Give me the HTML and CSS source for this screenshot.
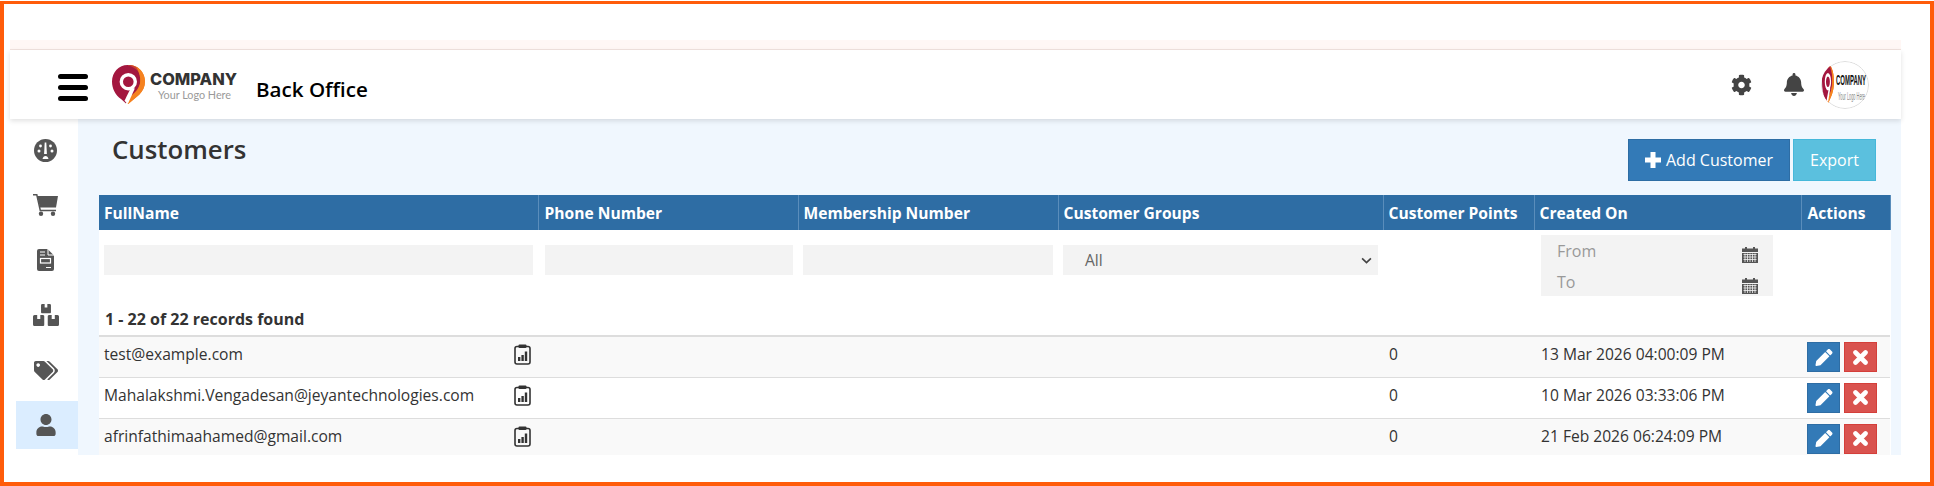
FILE: index.html
```html
<!DOCTYPE html>
<html lang="en">
<head>
  <meta charset="UTF-8" />
  <meta name="viewport" content="width=device-width, initial-scale=1.0"/>
  <title>Customers</title>
  <link rel="stylesheet" href="styles.css">
</head>
<body>
  <svg class="defs" width="0" height="0" aria-hidden="true">
    <defs>
      <symbol id="i-report" viewBox="0 0 17 21">
        <rect x="1" y="2.5" width="15" height="17.5" rx="2" fill="none" stroke="#333" stroke-width="1.6"/>
        <rect x="4.5" y="0.5" width="8" height="3.5" rx="1" fill="#333"/>
        <path d="M4 13h2.4v4H4zM7.4 11h2.4v6H7.4zM10.8 7.5h2.4V17h-2.4z" fill="#333"/>
      </symbol>
      <symbol id="i-cal" viewBox="0 0 16 17">
        <path d="M0 2.5h3V1h2v1.500h6V1h2v1.500h3V6H0z" fill="#555"/>
        <path d="M0 7h16v10H0z" fill="#555"/>
        <path d="M1.500 8.500h13M1.500 11h13M1.500 13.500h13M3 7.500v8.500M5.500 7.500v8.500M8 7.500v8.500M10.500 7.500v8.500M13 7.500v8.500" stroke="#f3f3f3" stroke-width=".8" fill="none"/>
      </symbol>
      <symbol id="i-pencil" viewBox="0 0 512 512">
        <path fill="#fff" d="M497.900 142.100l-46.100 46.100c-4.700 4.700-12.300 4.700-17 0l-111-111c-4.700-4.700-4.700-12.300 0-17l46.100-46.100c18.700-18.700 49.100-18.700 67.900 0l60.100 60.100c18.800 18.700 18.800 49.100 0 67.900zM284.200 99.800L21.600 362.400.4 483.900c-2.900 16.400 11.400 30.600 27.800 27.800l121.500-21.300 262.600-262.600c4.700-4.700 4.700-12.300 0-17l-111-111c-4.800-4.700-12.400-4.700-17.100 0z"/>
      </symbol>
      <symbol id="i-close" viewBox="0 0 15 15">
        <path d="M2.500 2.500l10 10M12.500 2.500l-10 10" stroke="#fff" stroke-width="4.600" stroke-linecap="round" fill="none"/>
      </symbol>
      <symbol id="i-box" viewBox="0 0 11.500 11">
        <path fill="#555" d="M1.500 0H4.200v4h3.100V0H10a1.500 1.500 0 0 1 1.500 1.500v8A1.500 1.500 0 0 1 10 11H1.500A1.500 1.500 0 0 1 0 9.500v-8A1.500 1.500 0 0 1 1.500 0z"/>
      </symbol>
      <symbol id="logo-pin" viewBox="0 0 33 39" preserveAspectRatio="none">
        <path fill="#f58220" d="M17 0c9 0 16 7.300 16 16.500 0 5.200-2.200 9.500-5.800 13.200L16.200 39l-4.500-4.500 3-11.500z"/>
        <path fill="#a3173f" d="M15.500 0C22 0 28 5 28.500 13.500 29 22 23 29 15 33l-1 5.500-5-4.500C3.500 30 0 24 0 16.500 0 7.300 7 0 15.500 0z"/>
        <path fill="#c8402f" d="M15.500 0c3-.2 6 .4 9 2 3 2 4.500 4.500 4.500 8-3-5-8-8.500-13.500-10z"/>
        <path fill="#f58220" d="M24 1.500c5.500 3 9 8.500 9 15 0 5.200-2.200 9.500-5.800 13.200L16.200 39l-2-2c5-4 13-10.500 14-19 .6-6-1.200-11.500-4.200-16.500z"/>
        <circle cx="16.300" cy="16.700" r="7" fill="#a3173f" stroke="#fff" stroke-width="3.400"/>
        <path fill="#fff" d="M19 22.500l3.800 1L15.800 39l-3.300-3.300z"/>
      </symbol>
    </defs>
  </svg>

  <div class="frame">
    <div class="strip"></div>

    <header class="topbar">
      <div class="burger"><span></span><span></span><span></span></div>
      <svg class="logo-pin"><use href="#logo-pin"/></svg>
      <div class="logo-text">
        <div class="logo-name">COMPANY</div>
        <div class="logo-sub">Your Logo Here</div>
      </div>
      <div class="app-name">Back Office</div>

      <div class="top-icons">
        <svg class="ico-gear" viewBox="0 0 512 512"><path fill="#444" d="M487.4 315.700l-42.600-24.600c4.300-23.200 4.300-47 0-70.200l42.600-24.600c4.900-2.800 7.100-8.600 5.500-14-11.100-35.600-30-67.800-54.700-94.600-3.800-4.100-10-5.100-14.800-2.300L380.800 110c-17.900-15.400-38.500-27.300-60.800-35.100V25.800c0-5.600-3.900-10.500-9.400-11.700-36.700-8.200-74.300-7.800-109.200 0-5.500 1.200-9.400 6.100-9.400 11.700V75c-22.200 7.900-42.800 19.800-60.800 35.100L88.700 85.500c-4.900-2.800-11-1.900-14.800 2.300-24.700 26.700-43.600 58.900-54.700 94.600-1.700 5.400.6 11.200 5.500 14L67.300 221c-4.300 23.200-4.300 47 0 70.200l-42.600 24.600c-4.900 2.800-7.100 8.600-5.500 14 11.100 35.600 30 67.800 54.700 94.600 3.800 4.100 10 5.100 14.800 2.300l42.600-24.600c17.900 15.400 38.500 27.300 60.800 35.100v49.200c0 5.600 3.900 10.500 9.400 11.700 36.700 8.200 74.300 7.800 109.200 0 5.500-1.200 9.400-6.100 9.400-11.700v-49.200c22.200-7.900 42.800-19.800 60.800-35.100l42.600 24.600c4.900 2.800 11 1.900 14.800-2.300 24.700-26.700 43.600-58.900 54.700-94.600 1.500-5.500-.7-11.300-5.600-14.100zM256 336c-44.100 0-80-35.900-80-80s35.900-80 80-80 80 35.900 80 80-35.900 80-80 80z"/></svg>
        <svg class="ico-bell" viewBox="0 0 448 512"><path fill="#444" d="M224 512c35.320 0 63.970-28.650 63.970-64H160.030c0 35.350 28.650 64 63.970 64zm215.390-149.710c-19.320-20.760-55.470-51.990-55.470-154.290 0-77.700-54.480-139.900-127.940-155.160V32c0-17.670-14.320-32-31.980-32s-31.980 14.330-31.980 32v20.840C118.560 68.100 64.080 130.300 64.080 208c0 102.300-36.150 133.530-55.470 154.290-6 6.450-8.660 14.160-8.610 21.710.11 16.400 12.980 32 32.100 32h383.800c19.120 0 32-15.600 32.100-32 .05-7.550-2.610-15.270-8.610-21.710z"/></svg>
        <div class="avatar">
          <svg viewBox="0 0 46 46" width="46" height="46">
            <use href="#logo-pin" x="0" y="3" width="12" height="39"/>
            <text class="av-name" x="14" y="23" textLength="30" lengthAdjust="spacingAndGlyphs">COMPANY</text>
            <text class="av-sub" x="16" y="38" textLength="27" lengthAdjust="spacingAndGlyphs">Your Logo Here</text>
          </svg>
        </div>
      </div>
    </header>

    <div class="main">
      <nav class="sidebar">
        <a class="nav-item">
          <svg class="ico-dash" viewBox="0 0 23 23">
            <circle cx="11.500" cy="11.500" r="11.500" fill="#555"/>
            <path d="M10.700 3.500h1.600l.6 11.500h-2.800z" fill="#fff"/>
            <circle cx="5" cy="12" r="1.500" fill="#fff"/><circle cx="18" cy="12" r="1.500" fill="#fff"/>
            <circle cx="6.500" cy="7" r="1.400" fill="#fff"/><circle cx="16.500" cy="7" r="1.400" fill="#fff"/>
            <path d="M8.500 20c.5-2 1.500-3 3-3s2.500 1 3 3z" fill="#fff"/>
          </svg>
        </a>
        <a class="nav-item">
          <svg class="ico-cart" viewBox="0 0 25 22">
            <path d="M0 .8h3.800l3.500 15.700H23" fill="none" stroke="#555" stroke-width="1.500"/>
            <path d="M4.200 2H25l-2 11.500H7z" fill="#555"/>
            <circle cx="8" cy="19.700" r="2.200" fill="#555"/><circle cx="20" cy="19.700" r="2.200" fill="#555"/>
          </svg>
        </a>
        <a class="nav-item">
          <svg class="ico-doc" viewBox="0 0 17 22">
            <path fill="#555" d="M2 0h8.500L17 6.500V20a2 2 0 0 1-2 2H2a2 2 0 0 1-2-2V2a2 2 0 0 1 2-2z"/>
            <path d="M11 0v6h6" fill="none" stroke="#fff" stroke-width="1"/>
            <path d="M3 3h5M3 6h5M9 18.500h5" stroke="#fff" stroke-width="1.200"/>
            <rect x="3.500" y="9.500" width="10" height="4.500" fill="none" stroke="#fff" stroke-width="1.200"/>
          </svg>
        </a>
        <a class="nav-item">
          <svg class="ico-boxes" viewBox="0 0 26 22">
            <use href="#i-box" x="7.250" y="0" width="11.500" height="9.500"/>
            <use href="#i-box" x="0" y="11" width="11.500" height="11"/>
            <use href="#i-box" x="14.500" y="11" width="11.500" height="11"/>
          </svg>
        </a>
        <a class="nav-item">
          <svg class="ico-tags" viewBox="0 0 640 512"><path fill="#555" d="M497.941 225.941L286.059 14.059A48 48 0 0 0 252.118 0H48C21.490 0 0 21.490 0 48v204.118a48 48 0 0 0 14.059 33.941l211.882 211.882c18.744 18.745 49.136 18.746 67.882 0l204.118-204.118c18.745-18.745 18.745-49.137 0-67.882zM112 160c-26.510 0-48-21.490-48-48s21.490-48 48-48 48 21.490 48 48-21.490 48-48 48zm513.941 133.823L421.823 497.941c-18.745 18.745-49.137 18.745-67.882 0l-.36-.36L527.640 323.522c16.999-16.999 26.360-39.600 26.360-63.640s-9.362-46.641-26.360-63.640L331.397 0h48.721a48 48 0 0 1 33.941 14.059l211.882 211.882c18.745 18.745 18.745 49.137 0 67.882z"/></svg>
        </a>
        <a class="nav-item active">
          <svg class="ico-user" viewBox="0 0 448 512"><path fill="#555" d="M224 256c70.700 0 128-57.300 128-128S294.700 0 224 0 96 57.300 96 128s57.300 128 128 128zm89.600 32h-16.700c-22.200 10.200-46.900 16-72.900 16s-50.600-5.800-72.900-16h-16.700C60.200 288 0 348.200 0 422.400V464c0 26.500 21.500 48 48 48h352c26.500 0 48-21.500 48-48v-41.600c0-74.200-60.200-134.400-134.400-134.400z"/></svg>
        </a>
      </nav>

      <section class="content">
        <div class="toolbar">
          <h1>Customers</h1>
          <div class="toolbar-btns">
            <button class="btn btn-add">
              <svg class="ico-plus" viewBox="0 0 16 16"><path fill="#fff" d="M5.500 0h5v5.500H16v5h-5.500V16h-5v-5.500H0v-5h5.500z"/></svg>
              Add Customer
            </button>
            <button class="btn btn-export">Export</button>
          </div>
        </div>

        <table class="grid">
          <colgroup>
            <col class="c-name"><col class="c-phone"><col class="c-member"><col class="c-group"><col class="c-points"><col class="c-date"><col class="c-act">
          </colgroup>
          <thead>
            <tr>
              <th>FullName</th>
              <th class="th-shift">Phone Number</th>
              <th>Membership Number</th>
              <th>Customer Groups</th>
              <th>Customer Points</th>
              <th>Created On</th>
              <th class="th-shift">Actions</th>
            </tr>
          </thead>
          <tbody>
            <tr class="filters">
              <td><input type="text"></td>
              <td class="phone-cell"><input type="text"></td>
              <td><input type="text"></td>
              <td>
                <div class="fake-select">
                  <span>All</span>
                  <svg viewBox="0 0 10 6"><path d="M1 1l4 4 4-4" fill="none" stroke="#444" stroke-width="1.500"/></svg>
                </div>
              </td>
              <td></td>
              <td class="date-cell">
                <div class="date-box">
                  <div class="date-line"><span>From</span><svg><use href="#i-cal"/></svg></div>
                  <div class="date-line"><span>To</span><svg><use href="#i-cal"/></svg></div>
                </div>
              </td>
              <td></td>
            </tr>
            <tr class="count">
              <td colspan="7">1 - 22 of 22 records found</td>
            </tr>
            <tr class="row odd">
              <td><div class="name-cell"><span>test@example.com</span><svg><use href="#i-report"/></svg></div></td>
              <td></td><td></td><td></td>
              <td class="points-cell">0</td>
              <td>13 Mar 2026 04:00:09 PM</td>
              <td class="act-cell"><button class="mini mini-edit"><svg><use href="#i-pencil"/></svg></button><button class="mini mini-del"><svg><use href="#i-close"/></svg></button></td>
            </tr>
            <tr class="row">
              <td><div class="name-cell"><span>Mahalakshmi.Vengadesan@jeyantechnologies.com</span><svg><use href="#i-report"/></svg></div></td>
              <td></td><td></td><td></td>
              <td class="points-cell">0</td>
              <td>10 Mar 2026 03:33:06 PM</td>
              <td class="act-cell"><button class="mini mini-edit"><svg><use href="#i-pencil"/></svg></button><button class="mini mini-del"><svg><use href="#i-close"/></svg></button></td>
            </tr>
            <tr class="row odd">
              <td><div class="name-cell"><span>afrinfathimaahamed@gmail.com</span><svg><use href="#i-report"/></svg></div></td>
              <td></td><td></td><td></td>
              <td class="points-cell">0</td>
              <td>21 Feb 2026 06:24:09 PM</td>
              <td class="act-cell"><button class="mini mini-edit"><svg><use href="#i-pencil"/></svg></button><button class="mini mini-del"><svg><use href="#i-close"/></svg></button></td>
            </tr>
          </tbody>
        </table>
      </section>
    </div>
  </div>
</body>
</html>
```

FILE: styles.css
```css
:root {
  --orange: #ff5c0a;
  --blue: #337ab7;
  --head: #2e6da4;
  --page: #f0f7fe;
  --field: #f3f3f3;
}

* {
  box-sizing: border-box;
}

html, body {
  margin: 0;
  background: #fff;
}

body {
  font-family: "Open Sans", "Noto Sans", sans-serif;
  color: #333;
  padding-top: 1px;
}

.defs {
  position: absolute;
}

.frame {
  height: 485px;
  border: solid var(--orange);
  border-width: 3px 4px 4px 4px;
  padding: 36px 29px 0 6px;
  overflow: hidden;
}

.strip {
  height: 10px;
  background: #fff7f5;
  border-bottom: 1px solid #f1e3df;
}

/* top bar */
.topbar {
  height: 69px;
  background: #fff;
  display: flex;
  align-items: flex-start;
  box-shadow: 0 2px 5px rgba(0, 0, 0, 0.12);
  position: relative;
  z-index: 2;
}

.burger {
  margin: 24px 0 0 48px;
  width: 30px;
}

.burger span {
  display: block;
  height: 4.5px;
  background: #000;
  border-radius: 3px;
  margin-bottom: 6.5px;
}

.logo-pin {
  width: 33px;
  height: 39px;
  margin: 15px 0 0 24px;
}

.logo-text {
  margin: 21px 0 0 5px;
  width: 92px;
}

.logo-name {
  font-family: Inter, sans-serif;
  font-weight: 800;
  font-size: 16.4px;
  line-height: 17px;
  color: #333;
  white-space: nowrap;
}

.logo-sub {
  font-family: Lato, sans-serif;
  font-size: 10.8px;
  line-height: 14px;
  color: #999;
  margin-left: 8px;
  white-space: nowrap;
}

.app-name {
  margin: 24px 0 0 14px;
  font-size: 20.6px;
  line-height: 30px;
  font-weight: 600;
  color: #000;
}

.top-icons {
  margin-left: auto;
  display: flex;
  align-items: flex-start;
  padding-right: 32px;
}

.ico-gear {
  width: 21px;
  height: 22px;
  margin-top: 24px;
}

.ico-bell {
  width: 20px;
  height: 23px;
  margin: 23px 0 0 32px;
}

.avatar {
  width: 48px;
  height: 48px;
  margin: 11px 0 0 17px;
  border: 1px solid #ddd;
  border-radius: 50%;
  background: #fff;
  clip-path: circle(50%);
}

.avatar svg {
  display: block;
  overflow: visible;
}

.av-name {
  font: 700 15px "Liberation Sans", sans-serif;
  fill: #111;
}

.av-sub {
  font: 400 10px "Liberation Sans", sans-serif;
  fill: #888;
}

/* body */
.main {
  display: flex;
  height: 336px;
}

.sidebar {
  width: 68px;
  background: #fff;
  padding: 7px 0 0 6px;
  display: flex;
  flex-direction: column;
  gap: 7px;
}

.nav-item {
  height: 48px;
  display: flex;
  align-items: center;
  justify-content: center;
  padding-right: 3px;
}

.nav-item.active {
  background: #dbedff;
}

.ico-dash { width: 23px; height: 23px; }
.ico-cart { width: 25px; height: 22px; }
.ico-doc { width: 17px; height: 22px; }
.ico-boxes { width: 26px; height: 22px; }
.ico-tags { width: 24px; height: 21px; }
.ico-user { width: 20px; height: 22px; }

.content {
  flex: 1;
  background: var(--page);
  padding: 0 11px 0 21px;
  overflow: hidden;
}

.toolbar {
  height: 76px;
  display: flex;
  justify-content: space-between;
  align-items: flex-start;
  padding: 0 14px;
}

h1 {
  margin: 11px 0 0 -1px;
  font-size: 25.8px;
  line-height: 38px;
  font-weight: 600;
  color: #333;
}

.toolbar-btns {
  display: flex;
  gap: 3px;
  margin-top: 20px;
}

.btn {
  height: 42px;
  border: 1px solid;
  font-family: inherit;
  font-size: 16px;
  color: #fff;
  padding: 0;
  display: flex;
  align-items: center;
  justify-content: center;
  gap: 5px;
}

.btn-add {
  width: 162px;
  background: var(--blue);
  border-color: #2e6da4;
}

.btn-export {
  width: 83px;
  background: #5bc0de;
  border-color: #46b8da;
}

.ico-plus {
  width: 16px;
  height: 16px;
}

/* table */
.grid {
  width: 1791px;
  table-layout: fixed;
  border-collapse: collapse;
  background: #fff;
  font-size: 15.6px;
}

.c-name { width: 439px; }
.c-phone { width: 260px; }
.c-member { width: 260px; }
.c-group { width: 325px; }
.c-points { width: 151px; }
.c-date { width: 267px; }
.c-act { width: 89px; }

.grid th {
  height: 35px;
  padding: 0 5px;
  background: var(--head);
  border-right: 1px solid #5a8dbb;
  color: #fff;
  font-weight: 700;
  font-size: 15.6px;
  text-align: left;
  white-space: nowrap;
  overflow: hidden;
}

.grid .th-shift {
  padding-left: 6px;
}

.grid td {
  padding: 0 5px;
  vertical-align: top;
}

.filters td {
  height: 71px;
  padding-top: 15px;
}

.filters .phone-cell {
  padding-left: 7px;
}

.filters input,
.fake-select {
  display: block;
  width: 100%;
  height: 30px;
  border: none;
  background: var(--field);
}

.filters input {
  padding: 0 8px;
}

.fake-select {
  display: flex;
  align-items: center;
  justify-content: space-between;
  padding: 0 6px 0 22px;
  color: #666;
  font-size: 15.6px;
}

.fake-select svg {
  width: 11px;
  height: 7px;
}

.filters .date-cell {
  padding: 5px 0 0 7px;
}

.date-box {
  width: 232px;
  height: 61px;
  background: var(--field);
  padding: 0 15px 0 16px;
  color: #999;
  font-size: 16px;
}

.date-line {
  height: 30.5px;
  display: flex;
  justify-content: space-between;
  align-items: flex-start;
  line-height: 32px;
}

.date-line svg {
  width: 16px;
  height: 17px;
  margin-top: 11px;
}

.count td {
  height: 35px;
  padding: 7px 6px 0;
  font-weight: 700;
  font-size: 16px;
  border-bottom: 2px solid #ddd;
}

.row td {
  height: 41px;
  padding: 6px 5px 0;
  border-bottom: 1px solid #ddd;
  white-space: nowrap;
}

.row.odd td {
  background: #f9f9f9;
}

.row td:nth-child(6) {
  padding-left: 7px;
}

.row .points-cell {
  padding-left: 6px;
}

.name-cell {
  display: flex;
  justify-content: space-between;
  padding-right: 2px;
}

.name-cell svg {
  width: 17px;
  height: 21px;
  margin-top: 1px;
}

.row .act-cell {
  padding: 5px 0 0 6px;
}

.mini {
  width: 33px;
  height: 30px;
  padding: 0;
  margin-right: 4px;
  border: 1px solid;
  vertical-align: top;
  display: inline-flex;
  align-items: center;
  justify-content: center;
}

.mini-edit {
  background: var(--blue);
  border-color: #2e6da4;
}

.mini-edit svg {
  width: 18px;
  height: 17px;
}

.mini-del {
  background: #d9534f;
  border-color: #d43f3a;
}

.mini-del svg {
  width: 15px;
  height: 15px;
}
```
